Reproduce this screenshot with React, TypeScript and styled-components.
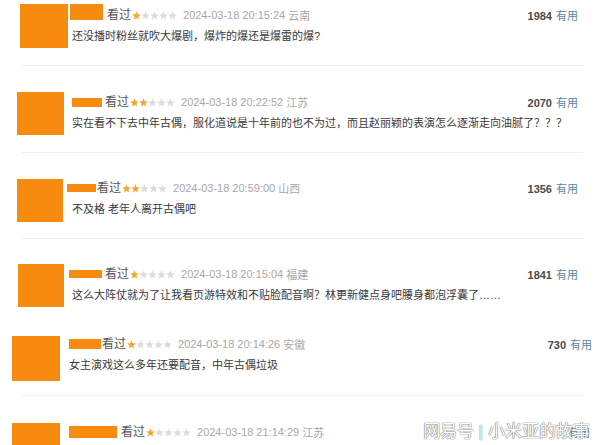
import React from "react";
import styled, { createGlobalStyle } from "styled-components";

const Global = createGlobalStyle`
  html, body { margin: 0; padding: 0; background: #fff; }
  body { font-family: "Liberation Sans", "Noto Sans CJK SC", sans-serif; }
`;

const Page = styled.div`
  position: relative;
  width: 600px;
  height: 445px;
  overflow: hidden;
  background: #fff;
  display: flex;
  flex-direction: column;
`;

const Item = styled.div<{ $h: number; $pt: number; $left: number }>`
  flex: none;
  box-sizing: border-box;
  height: ${(p) => p.$h}px;
  padding-top: ${(p) => p.$pt}px;
  padding-left: ${(p) => p.$left}px;
  display: flex;
  align-items: flex-start;
`;

const Avatar = styled.div<{ $w: number; $h: number }>`
  flex: none;
  width: ${(p) => p.$w}px;
  height: ${(p) => p.$h}px;
  background: #f78b0f;
`;

const Body = styled.div<{ $gap: number; $right: number }>`
  flex: 1;
  min-width: 0;
  margin-left: ${(p) => p.$gap}px;
  padding-right: ${(p) => p.$right}px;
  display: flex;
  flex-direction: column;
`;

const Header = styled.div<{ $mt: number }>`
  height: 20px;
  margin-top: ${(p) => p.$mt}px;
  display: flex;
  align-items: center;
  white-space: nowrap;
`;

const NameBar = styled.span<{ $w: number; $h: number; $ml: number; $lift: number }>`
  flex: none;
  width: ${(p) => p.$w}px;
  height: ${(p) => p.$h}px;
  margin-left: ${(p) => p.$ml}px;
  margin-bottom: ${(p) => p.$lift}px;
  background: #f78b0f;
`;

const Watched = styled.span<{ $ml: number }>`
  margin-left: ${(p) => p.$ml}px;
  font-size: 12px;
  color: #555;
  line-height: 20px;
`;

const Stars = styled.span`
  display: inline-flex;
  margin-left: 1px;
  gap: 0;
`;

const Time = styled.span`
  margin-left: 6px;
  font-size: 11px;
  color: #a8a8a8;
`;

const Place = styled.span`
  margin-left: 3px;
  font-size: 11px;
  color: #a8a8a8;
`;

const Votes = styled.span`
  margin-left: auto;
  font-size: 11px;
  color: #4a4a4a;
  font-weight: bold;
`;

const Useful = styled.span`
  margin-left: 4px;
  font-weight: normal;
  color: #5a86aa;
`;

const Comment = styled.div`
  margin-top: 3px;
  font-size: 11px;
  line-height: 16px;
  color: #3a3a3a;
  white-space: nowrap;
`;

const Divider = styled.div`
  flex: none;
  height: 1px;
  margin-left: 22px;
  width: 561px;
  background: #efefef;
`;

const Watermark = styled.div`
  position: absolute;
  right: 10px;
  bottom: 3px;
  font-size: 17px;
  line-height: 20px;
  color: #fff;
  white-space: nowrap;
  text-shadow: 0 0 1px #777, 0 0 1px #777, 0 0 1px #999;
  letter-spacing: 0;
`;

const Star: React.FC<{ on: boolean }> = ({ on }) => (
  <svg width="9" height="9" viewBox="0 0 10 10">
    <polygon
      points="5,0.4 6.3,3.6 9.7,3.8 7.1,6 7.9,9.4 5,7.6 2.1,9.4 2.9,6 0.3,3.8 3.7,3.6"
      fill={on ? "#f5a52a" : "#dcdcdc"}
    />
  </svg>
);

type Row = {
  h: number;
  pt: number;
  left: number;
  aw: number;
  ah: number;
  gap: number;
  right: number;
  mt: number;
  bw: number;
  bh: number;
  bml: number;
  lift: number;
  wml: number;
  stars: number;
  time: string;
  place: string;
  votes: string;
  text: string;
  divider: boolean;
};

const rows: Row[] = [
  {
    h: 65, pt: 4, left: 20, aw: 48, ah: 44, gap: 4, right: 22, mt: 1,
    bw: 33, bh: 16, bml: -2, lift: 6, wml: 4, stars: 1,
    time: "2024-03-18 20:15:24", place: "云南", votes: "1984",
    text: "还没播时粉丝就吹大爆剧，爆炸的爆还是爆雷的爆?", divider: true,
  },
  {
    h: 86, pt: 26, left: 17, aw: 47, ah: 43, gap: 8, right: 22, mt: 0,
    bw: 30, bh: 9, bml: 0, lift: 0, wml: 3, stars: 2,
    time: "2024-03-18 20:22:52", place: "江苏", votes: "2070",
    text: "实在看不下去中年古偶，服化道说是十年前的也不为过，而且赵丽颖的表演怎么逐渐走向油腻了？？？",
    divider: true,
  },
  {
    h: 85, pt: 26, left: 17, aw: 46, ah: 43, gap: 9, right: 22, mt: -1,
    bw: 29, bh: 8, bml: -5, lift: 0, wml: 1, stars: 2,
    time: "2024-03-18 20:59:00", place: "山西", votes: "1356",
    text: "不及格 老年人离开古偶吧", divider: true,
  },
  {
    h: 91, pt: 25, left: 18, aw: 46, ah: 43, gap: 8, right: 22, mt: 0,
    bw: 33, bh: 8, bml: -3, lift: 0, wml: 3, stars: 1,
    time: "2024-03-18 20:15:04", place: "福建", votes: "1841",
    text: "这么大阵仗就为了让我看页游特效和不贴脸配音啊？林更新健点身吧腰身都泡浮囊了……",
    divider: false,
  },
  {
    h: 65, pt: 6, left: 12, aw: 48, ah: 45, gap: 9, right: 8, mt: -2,
    bw: 32, bh: 10, bml: 0, lift: 0, wml: 1, stars: 1,
    time: "2024-03-18 20:14:26", place: "安徽", votes: "730",
    text: "女主演戏这么多年还要配音，中年古偶垃圾", divider: true,
  },
  {
    h: 60, pt: 27, left: 12, aw: 48, ah: 45, gap: 9, right: 10, mt: -1,
    bw: 48, bh: 12, bml: 0, lift: 0, wml: 4, stars: 1,
    time: "2024-03-18 21:14:29", place: "江苏", votes: "",
    text: "", divider: false,
  },
];

export default function App() {
  return (
    <>
      <Global />
      <Page>
        {rows.map((r, i) => (
          <React.Fragment key={i}>
            <Item $h={r.h} $pt={r.pt} $left={r.left}>
              <Avatar $w={r.aw} $h={r.ah} />
              <Body $gap={r.gap} $right={r.right}>
                <Header $mt={r.mt}>
                  <NameBar $w={r.bw} $h={r.bh} $ml={r.bml} $lift={r.lift} />
                  <Watched $ml={r.wml}>看过</Watched>
                  <Stars>
                    {[0, 1, 2, 3, 4].map((s) => (
                      <Star key={s} on={s < r.stars} />
                    ))}
                  </Stars>
                  <Time>{r.time}</Time>
                  <Place>{r.place}</Place>
                  <Votes>
                    {r.votes}
                    <Useful>有用</Useful>
                  </Votes>
                </Header>
                {r.text && <Comment>{r.text}</Comment>}
              </Body>
            </Item>
            {r.divider && <Divider />}
          </React.Fragment>
        ))}
        <Watermark>网易号 | 小米亚的故事</Watermark>
      </Page>
    </>
  );
}
